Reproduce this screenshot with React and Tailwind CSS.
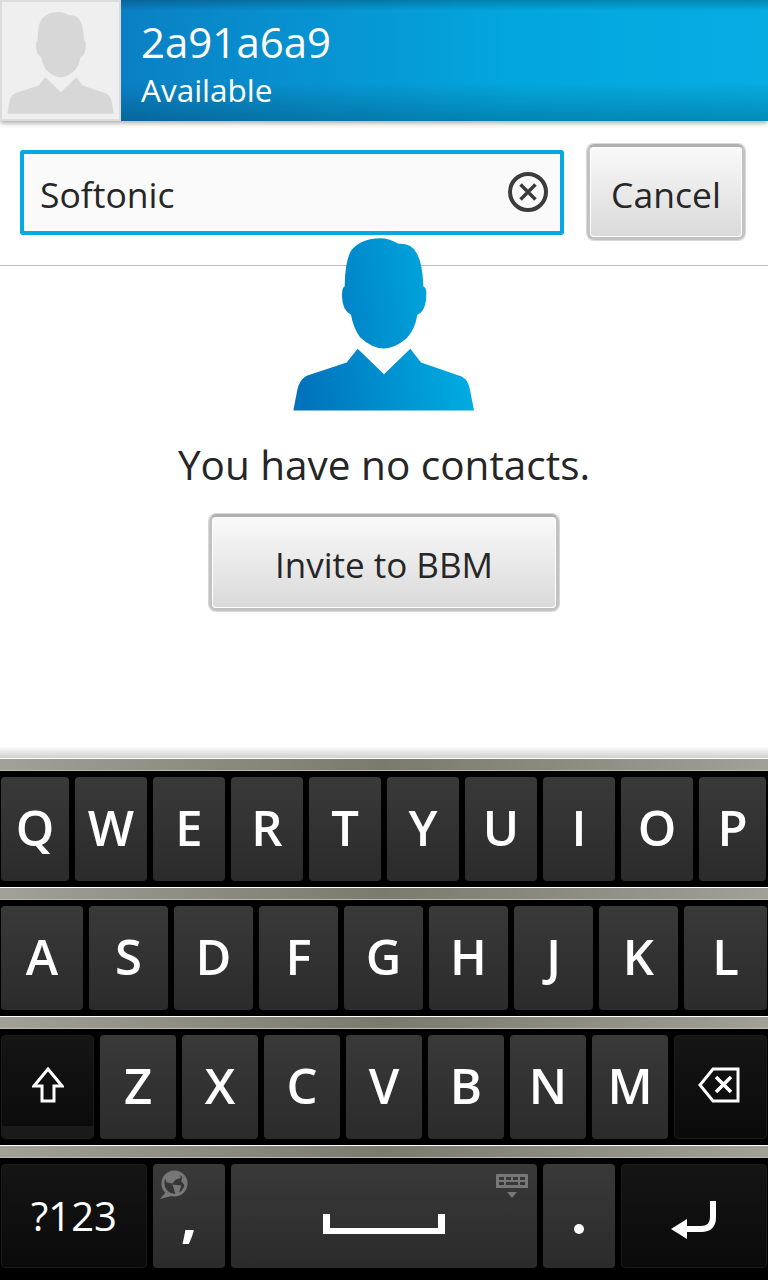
import React from "react";

const font = { fontFamily: '"Open Sans", sans-serif' };

const BODY = "M310 542 L322 480 Q328 450 350 438 L470 398 L503 357 L582 433 L661 357 L693 398 L815 440 Q835 450 840 480 L852 542 Z";
const HEAD = "M570 25 Q600 25 625 42 Q665 40 680 70 Q698 100 700 170 Q710 172 709 195 Q708 245 682 255 Q675 300 650 325 Q615 355 582 356 Q545 355 510 322 Q490 295 483 255 Q455 240 456 195 Q456 172 464 170 Q465 90 485 60 Q515 25 570 25 Z";

function Person({ className, fill, children }) {
  return (
    <svg viewBox="309 25 543 518" className={className}>
      {children}
      <path d={HEAD} fill={fill} />
      <path d={BODY} fill={fill} />
    </svg>
  );
}

function SilverButton({ className, children }) {
  return (
    <div className={`m-[1px] rounded-[7px] border-[3px] border-[#c2c2c2] border-t-[#b0b0b0] shadow-[0_0_0_1px_#d8d8d8] ${className}`}>
      <div className="flex h-full w-full items-center justify-center rounded-[4px] border border-white bg-gradient-to-b from-[#f9f9f9] to-[#dadada] pt-[5px] text-[#262626]">
        {children}
      </div>
    </div>
  );
}

function Strip() {
  return (
    <div className="h-[13px] border-t border-b border-t-white border-b-[#bdbbb0] bg-gradient-to-r from-[#a2a097] via-[#7c7a6d] to-[#a2a097]" />
  );
}

function Key({ w, dark, children, text = "text-[49px] font-semibold" }) {
  const tone = dark
    ? "bg-gradient-to-b from-[#151515] to-[#0a0a0a] border border-[#1b1b1b]"
    : "bg-gradient-to-b from-[#393939] to-[#2b2b2b]";
  return (
    <div className={`relative flex h-[104px] items-center justify-center rounded-[4px] text-white ${text} ${tone} ${w}`}>
      {children}
    </div>
  );
}

function KeyRow({ children }) {
  return (
    <div className="pb-[6px]">
      <Strip />
      <div className="flex gap-[6px] px-[1px] pt-[6px]">{children}</div>
    </div>
  );
}

function Letters({ items, w }) {
  return items.map((l) => (
    <Key key={l} w={w}>
      <span className="mb-[3px]">{l}</span>
    </Key>
  ));
}

export default function App() {
  return (
    <div style={font} className="flex h-[1280px] w-[768px] flex-col overflow-hidden bg-white">
      {/* header */}
      <div className="relative z-10 flex h-[121px] shrink-0 shadow-[0_2px_5px_rgba(0,0,0,0.35)]">
        <div className="flex w-[121px] shrink-0 items-end justify-center border-2 border-[#dcdcdc] bg-[#efefef] pb-[5px]">
          <Person className="h-[102px] w-[107px]" fill="#d7d7d7" />
        </div>
        <div className="flex flex-1 flex-col bg-[linear-gradient(180deg,rgba(0,0,0,0.22)_0%,rgba(0,0,0,0)_9%,rgba(0,0,0,0)_68%,rgba(0,0,0,0.2)_100%),linear-gradient(90deg,#0a80c4_0%,#03a6de_60%,#06ade3_100%)] pl-[20px] text-white">
          <div className="mt-[14px] text-[42px] leading-[56px]">2a91a6a9</div>
          <div className="mt-[-1px] text-[31.5px] leading-[42px]">Available</div>
        </div>
      </div>

      {/* search */}
      <div className="flex h-[145px] shrink-0 items-center gap-[22px] border-b border-[#bfbfbf] pl-[20px] pb-[2px]">
        <div className="flex h-[85px] w-[544px] items-center justify-between rounded-[3px] border-[4px] border-[#03a9e0] bg-[#fafafa] pl-[16px] pr-[12px] text-[35.5px] text-[#262626]">
          <span className="pt-[5px]">Softonic</span>
          <svg viewBox="0 0 40 40" className="h-[40px] w-[40px]" fill="none" stroke="#3c3c3c">
            <circle cx="20" cy="20" r="18" strokeWidth="4" />
            <path d="M12.5 12.5 L27.5 27.5 M27.5 12.5 L12.5 27.5" strokeWidth="3.5" />
          </svg>
        </div>
        <SilverButton className="h-[96px] w-[158px] text-[35.5px]">Cancel</SilverButton>
      </div>

      {/* empty state */}
      <div className="flex flex-1 flex-col items-center">
        <Person className="relative mt-[-28px] mr-[2px] h-[173px] w-[181px]" fill="url(#blue)">
          <defs>
            <linearGradient id="blue" gradientUnits="userSpaceOnUse" x1="340" y1="480" x2="850" y2="400">
              <stop offset="0" stopColor="#0073bc" />
              <stop offset="1" stopColor="#00aee3" />
            </linearGradient>
          </defs>
        </Person>
        <div className="mt-[26px] text-[40.5px] leading-[56px] text-[#262626]">You have no contacts.</div>
        <SilverButton className="mt-[21px] h-[97px] w-[350px] text-[35px]">Invite to BBM</SilverButton>
      </div>

      {/* keyboard */}
      <div className="shrink-0">
        <div className="h-[12px] bg-gradient-to-b from-white to-[#cfcfcf]" />
        <div className="h-[522px] bg-black">
          <KeyRow>
            <Key w="w-[68px]"><span className="mb-[3px]">Q</span></Key>
            <Letters items={["W", "E", "R", "T", "Y", "U", "I", "O"]} w="w-[72px]" />
            <Key w="w-[67px]"><span className="mb-[3px]">P</span></Key>
          </KeyRow>
          <KeyRow>
            <Key w="w-[82px]"><span className="mb-[3px]">A</span></Key>
            <Letters items={["S", "D", "F", "G", "H", "J", "K"]} w="w-[79px]" />
            <Key w="w-[83px]"><span className="mb-[3px]">L</span></Key>
          </KeyRow>
          <KeyRow>
            <Key w="w-[93px]" dark>
              <svg viewBox="0 0 32 36" className="mb-[4px] h-[36px] w-[32px]" fill="none" stroke="white" strokeWidth="3">
                <path d="M16 2 L30 19 H22 V34 H10 V19 H2 Z" />
              </svg>
              <div className="absolute inset-x-0 bottom-0 h-[12px] rounded-b-[4px] bg-[#1a1a1a]" />
            </Key>
            <Letters items={["Z", "X", "C", "V", "B", "N", "M"]} w="w-[76px]" />
            <Key w="w-[93px]" dark>
              <svg viewBox="0 0 42 36" className="mb-[4px] mr-[4px] h-[36px] w-[42px]" fill="none" stroke="white" strokeWidth="3">
                <path d="M40 2 H15 L2 18 L15 34 H40 Z" />
                <path d="M18 10 L33 25 M33 10 L18 25" strokeWidth="3.5" />
              </svg>
            </Key>
          </KeyRow>
          <KeyRow>
            <Key w="w-[146px]" dark text="text-[40px] font-medium">?123</Key>
            <Key w="w-[72px]">
              <svg viewBox="0 0 30 30" className="absolute left-[6px] top-[6px] h-[29px] w-[29px]">
                <circle cx="16" cy="14" r="12" fill="none" stroke="#777" strokeWidth="3" />
                <path d="M6 8 Q12 2 20 3 L23 8 L17 10 L14 14 L8 13 Z M14 15 L23 16 L20 26 L17 25 Z M24 7 L28 11 L27 16 L23 12 Z" fill="#777" />
                <path d="M1 30 L8 22 L13 27 Z" fill="#777" />
              </svg>
              <span className="mt-[-2px] text-[58px] font-bold leading-none">,</span>
            </Key>
            <Key w="w-[306px]">
              <svg viewBox="0 0 122 20" className="mt-[16px] h-[20px] w-[122px]" fill="white">
                <path d="M0 0 H7 V14 H115 V0 H122 V20 H0 Z" />
              </svg>
              <svg viewBox="0 0 32 24" className="absolute right-[9px] top-[10px] h-[24px] w-[32px]">
                <path fillRule="evenodd" fill="#777" d="M1 0 H31 Q32 0 32 1 V14 H0 V1 Q0 0 1 0 Z M3 3 V6 H8 V3 Z M10 3 V6 H15 V3 Z M17 3 V6 H22 V3 Z M24 3 V6 H29 V3 Z M3 8 V11 H8 V8 Z M10 8 V11 H22 V8 Z M24 8 V11 H29 V8 Z" />
                <path d="M11 18 H21 L16 24 Z" fill="#777" />
              </svg>
            </Key>
            <Key w="w-[72px]">
              <div className="mt-[26px] h-[10px] w-[10px] rounded-full bg-white" />
            </Key>
            <Key w="w-[146px]" dark>
              <svg viewBox="0 0 45 38" className="mt-[8px] mr-[2px] h-[38px] w-[45px]">
                <path d="M42 0 V16 Q42 28 30 28 H14" fill="none" stroke="white" strokeWidth="6" />
                <path d="M0 28 L16 18 V38 Z" fill="white" />
              </svg>
            </Key>
          </KeyRow>
        </div>
      </div>
    </div>
  );
}
